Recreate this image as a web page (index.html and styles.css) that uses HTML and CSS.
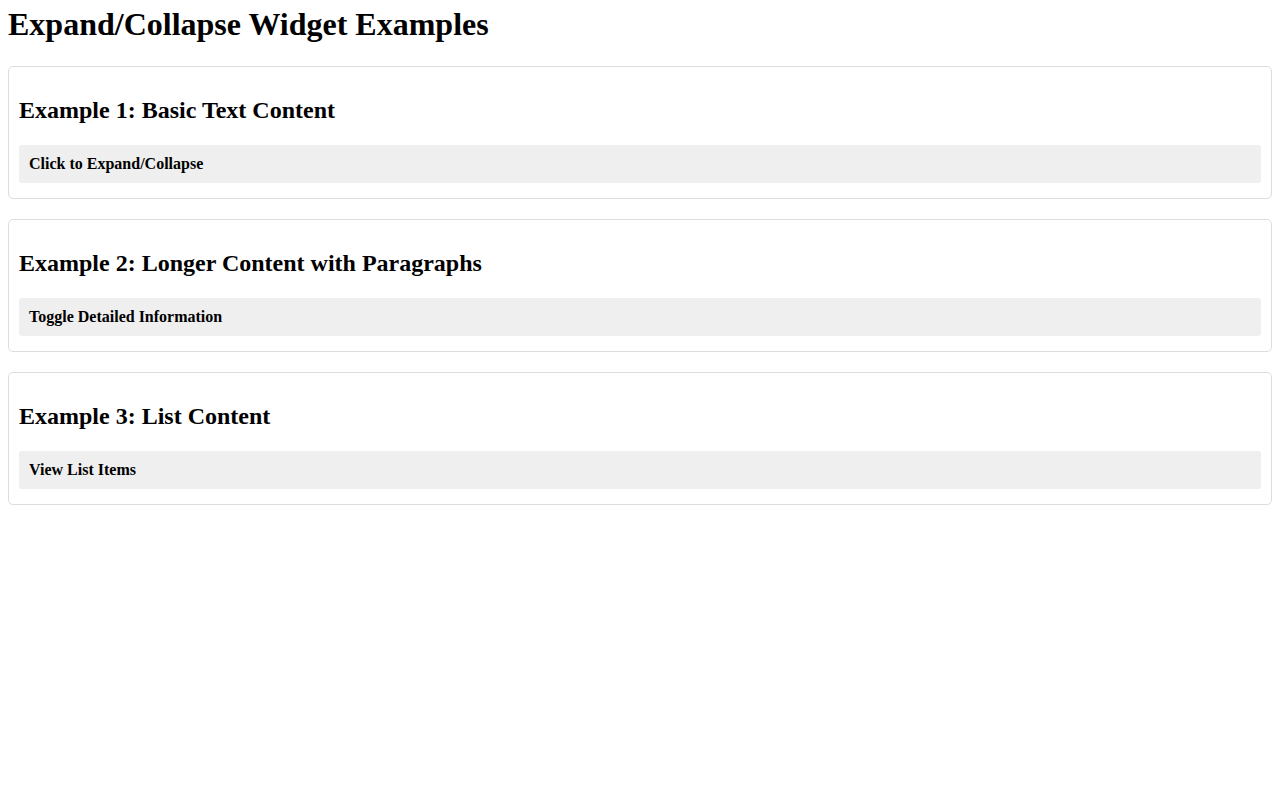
FILE: index.html
```html
<!DOCTYPE html>
<html lang="en">
<head>
  <meta charset="UTF-8">
  <title>Expand/Collapse Widget Examples</title>
  <link rel="stylesheet" href="styles.css">
</head>
<body>
  <h1>Expand/Collapse Widget Examples</h1>

  <div class="example">
    <h2>Example 1: Basic Text Content</h2>
    <details class="toggle">
      <summary>Click to Expand/Collapse</summary>
      <div class="toggle-body">
        <p>This is some basic hidden text that appears when the widget is expanded.</p>
      </div>
    </details>
  </div>

  <div class="example">
    <h2>Example 2: Longer Content with Paragraphs</h2>
    <details class="toggle">
      <summary>Toggle Detailed Information</summary>
      <div class="toggle-body">
        <p>The first paragraph of the detailed information.</p>
        <p>A second paragraph with a little more to say.</p>
      </div>
    </details>
  </div>

  <div class="example">
    <h2>Example 3: List Content</h2>
    <details class="toggle">
      <summary>View List Items</summary>
      <div class="toggle-body">
        <ul>
          <li>First item</li>
          <li>Second item</li>
          <li>Third item</li>
        </ul>
      </div>
    </details>
  </div>
</body>
</html>
```

FILE: styles.css
```css
body {
  margin: 8px;
  font-family: 'Liberation Serif', 'Times New Roman', serif;
  color: #000;
  background-color: #fff;
}

h1 {
  margin: 0 0 26px;
  font-size: 32px;
  line-height: 1;
}

h2 {
  font-size: 24px;
  margin: 20px 0 21px;
}

.example {
  border: 1px solid #ddd;
  border-radius: 5px;
  padding: 10px;
  margin-bottom: 20px;
}

.toggle {
  margin-bottom: 5px;
}

.toggle summary {
  list-style: none;
  cursor: pointer;
  font-weight: bold;
  padding: 10px;
  background-color: #efefef;
  border-radius: 3px;
}

.toggle summary::-webkit-details-marker {
  display: none;
}

.toggle-body {
  padding: 10px;
}
```
